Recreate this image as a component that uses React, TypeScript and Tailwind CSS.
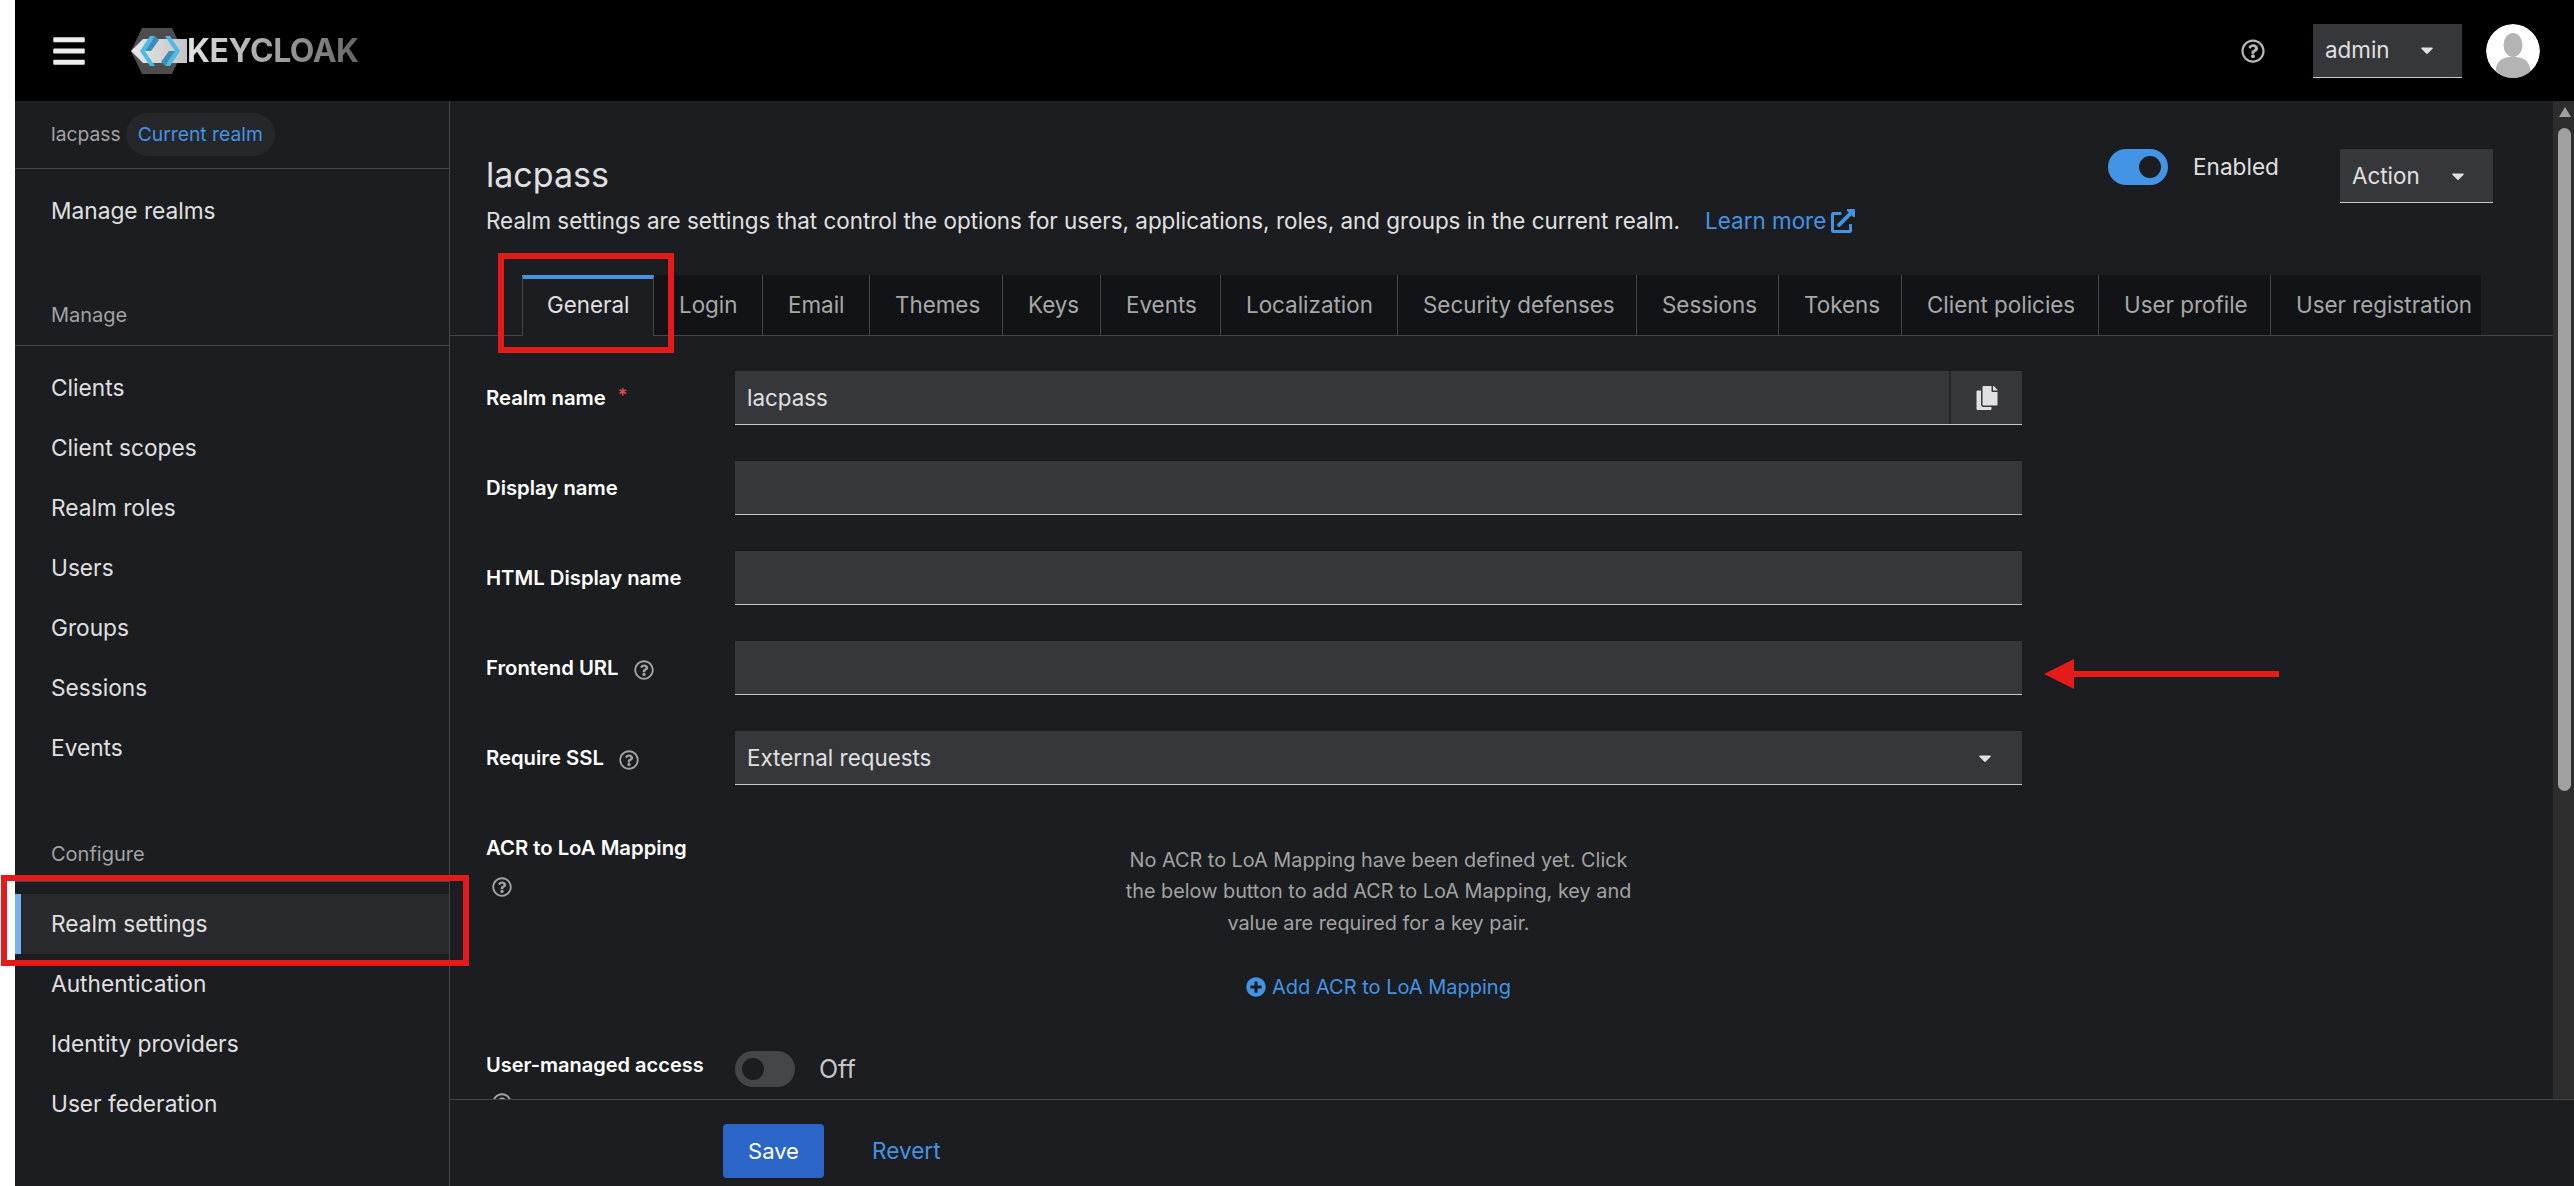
import React from 'react';
import { FaBars, FaCaretDown, FaCopy, FaExternalLinkAlt, FaPlusCircle, FaRegQuestionCircle } from 'react-icons/fa';

const NavItem = ({ label, active = false }: { label: string; active?: boolean }) => (
    <div className={`h-[60px] flex items-center text-[22.7px] text-[#e0e0e0] ${active ? 'bg-[#292a2e] border-l-[6px] border-[#78b2ee] pl-[30px]' : 'pl-[36px]'}`}>
        {label}
    </div>
);

const Group = ({ title, items, active, top }: { title: string; items: string[]; active?: string; top: string }) => (
    <div>
        <div className={`${top} pl-[36px] border-b border-[#444548] text-[20px] leading-[28px] text-[#a3a3a3]`}>{title}</div>
        <div className="pt-[12px]">
            {items.map((item) => (
                <NavItem key={item} label={item} active={item === active} />
            ))}
        </div>
    </div>
);

const Logo = () => (
    <div className="flex items-center relative">
        <svg width="58" height="46" viewBox="0 0 58 46">
            <defs>
                <linearGradient id="band" x1="0" x2="1" y1="0" y2="0">
                    <stop offset="0" stopColor="#e8e8e8" />
                    <stop offset="1" stopColor="#c4c4c4" />
                </linearGradient>
            </defs>
            <polygon points="11,0 41,0 52,23 41,46 11,46 0,23" fill="#4d4d4d" />
            <polygon points="0,23 12,11 56,11 56,35 12,35" fill="url(#band)" />
            <polygon points="19,8 24,8 14,23 24,38 19,38 9,23" fill="#4fb9e8" />
            <polygon points="24,8 28,12 20,23 14,23" fill="#3a8db5" />
            <polygon points="34,8 39,8 49,23 39,38 34,38 44,23" fill="#4fb9e8" />
            <polygon points="34,38 30,34 38,23 44,23" fill="#3a8db5" />
        </svg>
        <span className="ml-[-2px] font-['Inter',sans-serif] font-bold text-[32px] leading-none tracking-[-0.5px] bg-linear-to-r from-[#e4e4e4] to-[#666666] bg-clip-text text-transparent">
            KEYCLOAK
        </span>
    </div>
);

const Avatar = () => (
    <svg width="54" height="54" viewBox="0 0 54 54" className="rounded-full">
        <circle cx="27" cy="27" r="27" fill="#ffffff" />
        <ellipse cx="27" cy="21" rx="9.5" ry="12" fill="#b4b4b4" />
        <path d="M9 54 C9 38 14 33 27 33 C40 33 45 38 45 54 Z" fill="#b4b4b4" />
    </svg>
);

const Help = ({ className = '' }: { className?: string }) => (
    <FaRegQuestionCircle size={20} className={`text-[#a3a3a3] ${className}`} />
);

const Dropdown = ({ label, w, gap }: { label: string; w: string; gap: string }) => (
    <div className={`${w} h-[54px] bg-[#36373b] border-b border-[#c7c7c7] pl-[12px] flex items-center text-[22.4px] text-[#e0e0e0]`}>
        <span>{label}</span>
        <FaCaretDown size={20} className={`${gap} text-[#e0e0e0]`} />
    </div>
);

const tabs = [
    { label: 'Login', w: 'w-[109px]' },
    { label: 'Email', w: 'w-[107px]' },
    { label: 'Themes', w: 'w-[133px]' },
    { label: 'Keys', w: 'w-[98px]' },
    { label: 'Events', w: 'w-[120px]' },
    { label: 'Localization', w: 'w-[177px]' },
    { label: 'Security defenses', w: 'w-[239px]' },
    { label: 'Sessions', w: 'w-[142px]' },
    { label: 'Tokens', w: 'w-[123px]' },
    { label: 'Client policies', w: 'w-[197px]' },
    { label: 'User profile', w: 'w-[172px]' },
    { label: 'User registration', w: 'w-[210px]' },
];

const Row = ({ label, help, required, children }: { label: string; help?: boolean; required?: boolean; children?: React.ReactNode }) => (
    <div className="flex h-[54px]">
        <div className="w-[249px] flex items-center text-[20.3px] font-semibold text-white">
            <span>{label}</span>
            {required && <span className="ml-[12px] text-[#e5484d] text-[18px] mt-[-6px]">*</span>}
            {help && <Help className="ml-[15px] mt-[4px]" />}
        </div>
        {children}
    </div>
);

const TextInput = () => <div className="w-[1287px] h-[54px] bg-[#36373b] border-b border-[#c7c7c7]" />;

export default function App() {
    return (
        <div className="flex w-[2574px] h-[1186px] bg-white overflow-hidden relative font-['Inter',sans-serif]">
            <div className="w-[15px] shrink-0" />
            <div className="flex-1 flex flex-col bg-[#1b1d21]">
                <header className="h-[101px] shrink-0 bg-black flex items-center">
                    <FaBars size={36} className="ml-[36px] text-[#eeeeee]" />
                    <div className="ml-[44px]">
                        <Logo />
                    </div>
                    <FaRegQuestionCircle size={24} className="ml-auto text-[#b8b8b8]" />
                    <div className="ml-[48px]">
                        <Dropdown label="admin" w="w-[149px]" gap="ml-[27px]" />
                    </div>
                    <div className="ml-[24px] mr-[34px] mb-[-1px]">
                        <Avatar />
                    </div>
                </header>
                <div className="flex-1 flex min-h-0">
                    <aside className="w-[435px] shrink-0 border-r border-[#444548]">
                        <div className="h-[68px] border-b border-[#444548] pl-[36px] flex items-center text-[19.3px]">
                            <span className="text-[#a3a3a3]">lacpass</span>
                            <span className="ml-[5px] h-[43px] px-[12px] rounded-full bg-[#26272b] text-[#4394e5] flex items-center">Current realm</span>
                        </div>
                        <div className="pt-[12px]">
                            <NavItem label="Manage realms" />
                        </div>
                        <Group
                            top="h-[105px] pt-[60px]"
                            title="Manage"
                            items={['Clients', 'Client scopes', 'Realm roles', 'Users', 'Groups', 'Sessions', 'Events']}
                        />
                        <Group
                            top="h-[104px] pt-[62px]"
                            title="Configure"
                            active="Realm settings"
                            items={['Realm settings', 'Authentication', 'Identity providers', 'User federation']}
                        />
                    </aside>
                    <div className="flex-1 flex flex-col min-w-0">
                        <div className="h-[998px] flex shrink-0">
                            <main className="flex-1 min-w-0 overflow-hidden">
                                <div className="h-[174px] flex justify-between pl-[36px] pr-[60px]">
                                    <div>
                                        <h1 className="mt-[50px] text-[34px] leading-[48px] font-normal text-[#e0e0e0]">lacpass</h1>
                                        <p className="text-[22.43px] leading-[44px] text-[#e0e0e0] whitespace-nowrap flex items-center">
                                            Realm settings are settings that control the options for users, applications, roles, and groups in the current realm.
                                            <span className="ml-[25px] text-[#4394e5]">Learn more</span>
                                            <FaExternalLinkAlt size={24} className="ml-[5px] text-[#4394e5]" />
                                        </p>
                                    </div>
                                    <div className="pt-[48px] flex items-start">
                                        <div className="w-[60px] h-[36px] rounded-full bg-[#4394e5] flex items-center justify-end pr-[7px]">
                                            <div className="w-[22px] h-[22px] rounded-full bg-[#1b1d21]" />
                                        </div>
                                        <span className="ml-[25px] w-[147px] leading-[36px] text-[22.6px] text-[#e0e0e0]">Enabled</span>
                                        <Dropdown label="Action" w="w-[153px]" gap="ml-[28px]" />
                                    </div>
                                </div>
                                <div className="h-[61px] flex border-b border-[#444548] pl-[72px]">
                                    <div className="w-[132px] h-[61px] border-t-4 border-x border-t-[#4394e5] border-x-[#444548] bg-[#1b1d21] flex items-center pl-[24px] pb-[6px] text-[22.4px] text-[#e0e0e0] relative">General</div>
                                    <div className="flex">
                                        {tabs.map((t) => (
                                            <div key={t.label} className={`${t.w} bg-[#111316] border-r border-[#444548] last:border-r-0 flex items-center pl-[25px] text-[22.4px] text-[#a8a8a8] whitespace-nowrap overflow-hidden`}>
                                                {t.label}
                                            </div>
                                        ))}
                                    </div>
                                </div>
                                <div className="pt-[35px] pl-[36px] flex flex-col gap-[36px]">
                                    <Row label="Realm name" required>
                                        <div className="w-[1287px] h-[54px] bg-[#36373b] border-b border-[#c7c7c7] flex items-center">
                                            <span className="pl-[12px] flex-1 text-[22.4px] text-[#e0e0e0]">lacpass</span>
                                            <div className="w-[73px] h-[53px] border-l-2 border-[#26272b] flex items-center justify-center">
                                                <FaCopy size={24} className="text-[#e0e0e0]" />
                                            </div>
                                        </div>
                                    </Row>
                                    <Row label="Display name">
                                        <TextInput />
                                    </Row>
                                    <Row label="HTML Display name">
                                        <TextInput />
                                    </Row>
                                    <Row label="Frontend URL" help>
                                        <TextInput />
                                    </Row>
                                    <Row label="Require SSL" help>
                                        <div className="w-[1287px] h-[54px] bg-[#36373b] border-b border-[#c7c7c7] flex items-center justify-between pl-[12px] pr-[27px] text-[22.4px] text-[#e0e0e0]">
                                            <span>External requests</span>
                                            <FaCaretDown size={20} />
                                        </div>
                                    </Row>
                                    <div className="flex h-[194px]">
                                        <div className="w-[249px] pt-[13px] text-[20.3px] leading-[28px] font-semibold text-white">
                                            <div>ACR to LoA Mapping</div>
                                            <Help className="mt-[15px] ml-[6px]" />
                                        </div>
                                        <div className="w-[1287px] pt-[24px] flex flex-col items-center">
                                            <p className="w-[530px] text-center text-[19.85px] leading-[31.3px] text-[#a3a3a3]">
                                                No ACR to LoA Mapping have been defined yet. Click the below button to add ACR to LoA Mapping, key and value are required for a key pair.
                                            </p>
                                            <div className="mt-[34px] flex items-center text-[20px] leading-[28px] text-[#4394e5]">
                                                <FaPlusCircle size={20} className="mr-[6px]" />
                                                Add ACR to LoA Mapping
                                            </div>
                                        </div>
                                    </div>
                                    <div className="flex h-[36px]">
                                        <div className="w-[249px] text-[20px] leading-[28px] font-semibold text-white whitespace-nowrap">
                                            <div>User-managed access</div>
                                            <Help className="mt-[14px] ml-[6px]" />
                                        </div>
                                        <div className="w-[60px] h-[36px] rounded-full bg-[#45464a] flex items-center pl-[7px]">
                                            <div className="w-[22px] h-[22px] rounded-full bg-[#1b1d21]" />
                                        </div>
                                        <span className="ml-[24px] text-[25px] leading-[36px] text-[#c7c7c7]">Off</span>
                                    </div>
                                </div>
                            </main>
                            <div className="w-[21px] shrink-0 bg-[#2d2d2d] pl-[5px]">
                                <div className="h-[27px] pt-[6px] pl-[1px]">
                                    <div className="w-0 h-0 border-x-[6px] border-x-transparent border-b-[10px] border-b-[#a0a0a0]" />
                                </div>
                                <div className="w-[13px] h-[663px] rounded-full bg-[#a0a0a0]" />
                            </div>
                        </div>
                        <footer className="flex-1 border-t border-[#444548] pl-[273px] pt-[24px] flex items-start">
                            <div className="w-[101px] h-[54px] rounded-[4px] bg-[#2b65c8] text-white text-[22px] flex items-center justify-center">Save</div>
                            <div className="ml-[48px] h-[54px] flex items-center text-[22.6px] text-[#4394e5]">Revert</div>
                        </footer>
                    </div>
                </div>
            </div>
            {/* red annotations on the screenshot */}
            <div className="absolute left-[498px] top-[253px] w-[176px] h-[100px] border-[6px] border-[#e41b1b]" />
            <div className="absolute left-[1px] top-[875px] w-[468px] h-[91px] border-[6px] border-[#e41b1b]" />
            <svg className="absolute left-[2044px] top-[658px]" width="236" height="32" viewBox="0 0 236 32">
                <polygon points="0,16 30,1 30,13 235,13 235,19 30,19 30,31" fill="#e41b1b" />
            </svg>
        </div>
    );
}
